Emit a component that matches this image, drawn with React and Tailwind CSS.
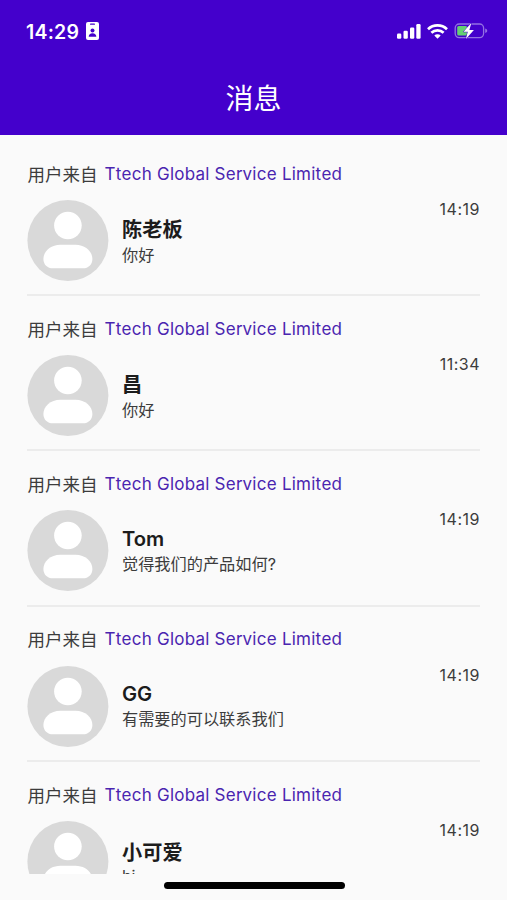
import React from 'react';

const company = 'Ttech Global Service Limited';

const conversations = [
  { id: 1, name: '陈老板', message: '你好', time: '14:19' },
  { id: 2, name: '昌', message: '你好', time: '11:34' },
  { id: 3, name: 'Tom', message: '觉得我们的产品如何?', time: '14:19', offset: 'pt-[16px]' },
  { id: 4, name: 'GG', message: '有需要的可以联系我们', time: '14:19', offset: 'pt-[15.5px]' },
  { id: 5, name: '小可爱', message: 'hi', time: '14:19', offset: 'pt-[19px]', lineHeight: 'leading-[20px]' },
];

function StatusBar() {
  return (
    <div className="flex items-center justify-between h-[62px] pl-[26px] pr-[19px] text-white">
      <div className="flex items-center gap-[6px]">
        <span className="w-[54px] pt-[1px] text-[19.5px] leading-6 font-semibold tracking-[0.2px]">14:29</span>
        {/* ID badge */}
        <svg className="w-[13px] h-[18px]" viewBox="0 0 13 18">
          <rect width="13" height="18" rx="2" fill="white" />
          <rect x="4" y="1.6" width="5" height="1.2" rx="0.6" fill="#4400cc" />
          <circle cx="6.5" cy="8.6" r="2" fill="#4400cc" />
          <path d="M2.7 14.8c0-2.3 1.5-3.6 3.8-3.6s3.8 1.3 3.8 3.6z" fill="#4400cc" />
        </svg>
      </div>

      <div className="flex items-center gap-[6px]">
        {/* Signal */}
        <svg className="w-[24px] h-[15px]" viewBox="0 0 24 15" fill="white">
          <rect x="0" y="9.5" width="4.3" height="5.2" rx="1.2" />
          <rect x="6.5" y="6.8" width="4.3" height="7.9" rx="1.2" />
          <rect x="13" y="3.5" width="4.3" height="11.2" rx="1.2" />
          <rect x="19.3" y="0" width="4.3" height="14.7" rx="1.2" />
        </svg>
        {/* Wifi */}
        <svg className="w-[21px] h-[15px]" viewBox="0 0 21 15" fill="none" stroke="white" strokeWidth="2.7">
          <path d="M1 5.2a13.7 13.7 0 0 1 19 0" />
          <path d="M4.4 8.8a8.8 8.8 0 0 1 12.2 0" />
          <path d="M10.5 14.8 7.3 11.6a4.6 4.6 0 0 1 6.4 0z" fill="white" stroke="none" />
        </svg>
        {/* Battery, charging */}
        <svg className="w-[34px] h-[18px]" viewBox="0 0 34 18">
          <rect x="1.2" y="2" width="28.4" height="13.6" rx="4" fill="none" stroke="#9370e2" strokeWidth="1.3" />
          <path d="M31.2 6.6c1.6.5 2 1.3 2 2.2s-.4 1.7-2 2.2z" fill="#9370e2" />
          <rect x="3.2" y="4" width="10" height="9.6" rx="1.5" fill="#65cf72" />
          <path d="M17.3 1 9.5 9.8h4.3l-1.9 7.2 8-9.1h-4.5z" fill="white" stroke="#4400cc" strokeWidth="1" paintOrder="stroke" />
        </svg>
      </div>
    </div>
  );
}

function Avatar() {
  return (
    <svg className="w-[82px] h-[81px] shrink-0" viewBox="-0.4 0 82 81">
      <circle cx="40.5" cy="40.5" r="40.5" fill="#d9d9d9" />
      <circle cx="40.5" cy="25.5" r="13.8" fill="white" />
      <path d="M33 44.7h15c10 0 17 6.8 17 14.2 0 5.5-4 9.4-9.5 9.4h-30c-5.5 0-9.5-3.9-9.5-9.4 0-7.4 7-14.2 17-14.2z" fill="white" />
    </svg>
  );
}

function Conversation({ name, message, time, offset = 'pt-[17px]', lineHeight = 'leading-[24px]' }) {
  return (
    <li className="flex flex-col shrink-0 h-[155.2px] pt-[20.8px] border-b-2 border-[#ececec]">
      <div className="flex items-center h-6 gap-[7px] whitespace-nowrap">
        <span className="pl-[0.5px] pt-[2px] text-[17.5px] leading-6 text-[#3c3c3c]">用户来自</span>
        <span className="text-[17px] leading-6 tracking-[0.25px] text-[#4a25b0] [font-kerning:none]">{company}</span>
      </div>
      <div className="flex mt-[14.2px]">
        <Avatar />
        <div className={`flex-1 pl-[13px] ${offset}`}>
          <div className="text-[20.2px] leading-[26px] font-semibold text-[#1c1c1c]">{name}</div>
          <div className={`text-[16.2px] text-[#3c3c3c] ${lineHeight}`}>{message}</div>
        </div>
        <span className="text-[16px] leading-[18px] tracking-[0.5px] text-[#3c3c3c]">{time}</span>
      </div>
    </li>
  );
}

export default function App() {
  return (
    <div className="flex flex-col w-[507px] h-[900px] overflow-hidden bg-[#fafafa] font-['Inter','Noto_Sans_CJK_SC',sans-serif]">
      <header className="h-[135px] shrink-0 bg-[#4400cc]">
        <StatusBar />
        <h1 className="pt-[1px] text-center text-[28px] leading-[72px] text-white">消息</h1>
      </header>

      <ul className="flex flex-col h-[739px] shrink-0 overflow-hidden px-[27px] pt-[6px]">
        {conversations.map((item) => (
          <Conversation key={item.id} {...item} />
        ))}
      </ul>

      {/* Home indicator */}
      <div className="flex justify-center pl-[1px] pt-[8px]">
        <div className="w-[181px] h-[7px] rounded-full bg-black" />
      </div>
    </div>
  );
}
